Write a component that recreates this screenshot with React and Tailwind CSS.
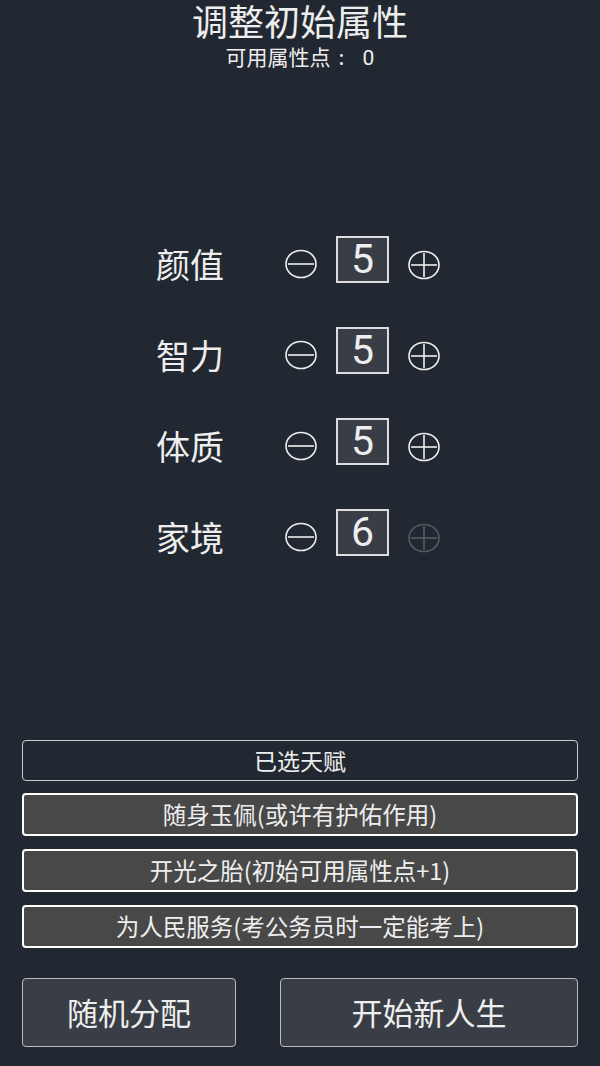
import { useState } from 'react'

const FONT = { fontFamily: '"Noto Sans CJK SC", "Noto Sans", sans-serif' }
const DIGITS = { fontFamily: 'Roboto, "Noto Sans", sans-serif' }

function MinusIcon({ disabled }) {
  const c = disabled ? '#55595f' : '#eeeeee'
  return (
    <svg width="32" height="30" viewBox="0 0 32 30" className="shrink-0">
      <ellipse cx="16" cy="15" rx="15" ry="13.5" fill="none" stroke={c} strokeWidth="1.6" />
      <line x1="3" y1="15" x2="29" y2="15" stroke={c} strokeWidth="1.6" />
    </svg>
  )
}

function PlusIcon({ disabled }) {
  const c = disabled ? '#55595f' : '#eeeeee'
  return (
    <svg width="32" height="30" viewBox="0 0 32 30" className="shrink-0">
      <ellipse cx="16" cy="15" rx="15" ry="13.5" fill="none" stroke={c} strokeWidth="1.6" />
      <line x1="3" y1="15" x2="29" y2="15" stroke={c} strokeWidth="1.6" />
      <line x1="16" y1="3" x2="16" y2="27" stroke={c} strokeWidth="1.6" />
    </svg>
  )
}

function StatRow({ label, value, canAdd, onMinus, onPlus }) {
  return (
    <div className="flex items-center pl-[156px] h-[47px]">
      <span className="w-[129px] text-[34px] leading-none mt-[9px] text-[#eeeeee]">{label}</span>
      <button onClick={onMinus} className="mt-[8px]">
        <MinusIcon disabled={value <= 0} />
      </button>
      <div className="ml-[19px] w-[53px] h-[47px] border-2 border-[#dddddd] bg-[#393e46] flex items-center justify-center">
        <span className="text-[41px] leading-none text-[#eeeeee]" style={DIGITS}>{value}</span>
      </div>
      <button onClick={onPlus} className="ml-[19px] mt-[10px]">
        <PlusIcon disabled={!canAdd} />
      </button>
    </div>
  )
}

export default function App() {
  // 家境 is capped in this draft, so its plus is greyed out
  const [stats, setStats] = useState([
    { name: '颜值', value: 5, max: 10 },
    { name: '智力', value: 5, max: 10 },
    { name: '体质', value: 5, max: 10 },
    { name: '家境', value: 6, max: 6 },
  ])
  const points = 0

  const talents = [
    '随身玉佩(或许有护佑作用)',
    '开光之胎(初始可用属性点+1)',
    '为人民服务(考公务员时一定能考上)',
  ]

  const change = (i, d) => {
    setStats(stats.map((s, idx) => (idx === i ? { ...s, value: Math.min(s.max, Math.max(0, s.value + d)) } : s)))
  }

  return (
    <div className="w-[600px] h-[1066px] bg-[#222831] text-[#eeeeee] flex flex-col" style={FONT}>
      {/* Header */}
      <h1 className="text-center text-[36px] leading-[40px]">调整初始属性</h1>
      <p className="text-center text-[21px] leading-[24px] mt-[4px]">
        可用属性点<span className="inline-block w-[32px] pl-[8px] text-left">:</span>
        <span style={DIGITS}>{points}</span>
      </p>

      {/* Stats */}
      <div className="mt-[166px] flex flex-col gap-[44px]">
        {stats.map((s, i) => (
          <StatRow
            key={s.name}
            label={s.name}
            value={s.value}
            canAdd={s.value < s.max}
            onMinus={() => change(i, -1)}
            onPlus={() => change(i, 1)}
          />
        ))}
      </div>

      {/* Talents */}
      <div className="mt-[184px] mx-[22px] flex flex-col">
        <div className="h-[41px] rounded-[4px] border border-[#cccccc] bg-[#222831] flex items-center justify-center text-[23px]">
          已选天赋
        </div>
        <div className="mt-[12px] flex flex-col gap-[13px]">
          {talents.map((t) => (
            <div
              key={t}
              className="h-[43px] rounded-[4px] border-2 border-white bg-[#484848] flex items-center justify-center text-[23.5px]"
            >
              {t}
            </div>
          ))}
        </div>
      </div>

      {/* Actions */}
      <div className="mt-[30px] mx-[22px] flex gap-[44px]">
        <button className="w-[214px] h-[69px] rounded-[4px] border border-[#bbbbbb] bg-[#393e46] text-[31px] text-[#eeeeee]">
          随机分配
        </button>
        <button className="flex-1 h-[69px] rounded-[4px] border border-[#bbbbbb] bg-[#393e46] text-[31px] text-[#eeeeee]">
          开始新人生
        </button>
      </div>
    </div>
  )
}
